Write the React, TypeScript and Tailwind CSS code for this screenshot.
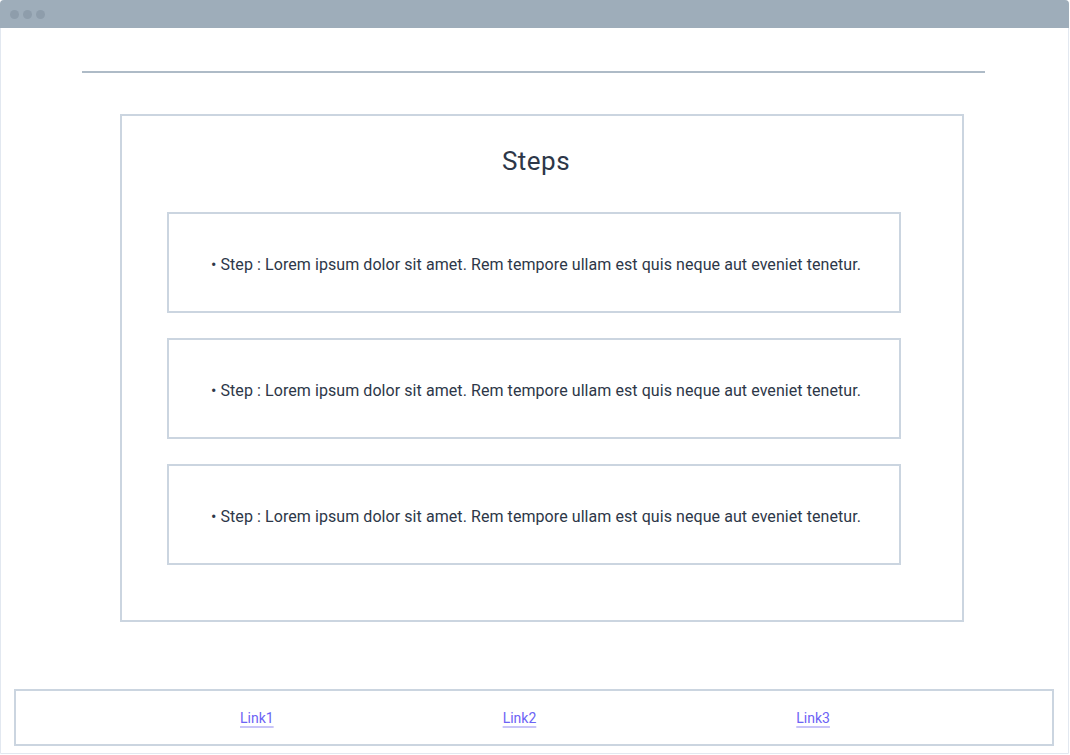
import React from 'react';

const steps = [
    'Step : Lorem ipsum dolor sit amet. Rem tempore ullam est quis neque aut eveniet tenetur.',
    'Step : Lorem ipsum dolor sit amet. Rem tempore ullam est quis neque aut eveniet tenetur.',
    'Step : Lorem ipsum dolor sit amet. Rem tempore ullam est quis neque aut eveniet tenetur.',
];

const App: React.FC = () => {
    return (
        <div className="w-[1070px] h-[755px] bg-white" style={{ fontFamily: 'Roboto, "Liberation Sans", sans-serif' }}>
            <div className="w-[1069px] h-[754px] border border-[#e2e8f0] rounded-t-[4px] flex flex-col">
                {/* Window bar */}
                <div className="h-[28px] -mx-px -mt-px bg-[#9eadba] rounded-t-[4px] flex items-center gap-[4px] pl-[10px] shrink-0">
                    <span className="w-[9px] h-[9px] rounded-full bg-[#8e9dab]" />
                    <span className="w-[9px] h-[9px] rounded-full bg-[#8e9dab]" />
                    <span className="w-[9px] h-[9px] rounded-full bg-[#8e9dab]" />
                </div>

                <div className="mt-[43px] ml-[81px] w-[903px] border-t-2 border-[#aebbc7]" />

                {/* Steps */}
                <div className="mt-[41px] ml-[119px] w-[844px] h-[508px] border-2 border-[#cbd5e0] pl-[45px] pt-[29px]">
                    <div className="w-[734px]">
                        <h2 className="pl-[4px] text-center text-[26px] leading-[32px] text-[#2d3748] tracking-[0.5px]">Steps</h2>
                        <div className="mt-[35px] flex flex-col gap-[25px]">
                            {steps.map((s, i) => (
                                <div key={i} className="h-[101px] border-2 border-[#cbd5e0] flex items-center justify-center pl-[4px] pt-[4px] text-[16px] text-[#2d3748] tracking-[0.07px]">
                                    • {s}
                                </div>
                            ))}
                        </div>
                    </div>
                </div>

                {/* Footer */}
                <div className="mt-[67px] ml-[13px] w-[1040px] h-[57px] border-2 border-[#cbd5e0] flex items-center pl-[224px] pt-[2px] text-[14px]">
                    <a href="#" className="text-[#6c63f5] underline decoration-[#c8c4f8] decoration-2 underline-offset-[3px]">Link1</a>
                    <a href="#" className="ml-[229px] text-[#6c63f5] underline decoration-[#c8c4f8] decoration-2 underline-offset-[3px]">Link2</a>
                    <a href="#" className="ml-[260px] text-[#6c63f5] underline decoration-[#c8c4f8] decoration-2 underline-offset-[3px]">Link3</a>
                </div>
            </div>
        </div>
    );
};

export default App;
